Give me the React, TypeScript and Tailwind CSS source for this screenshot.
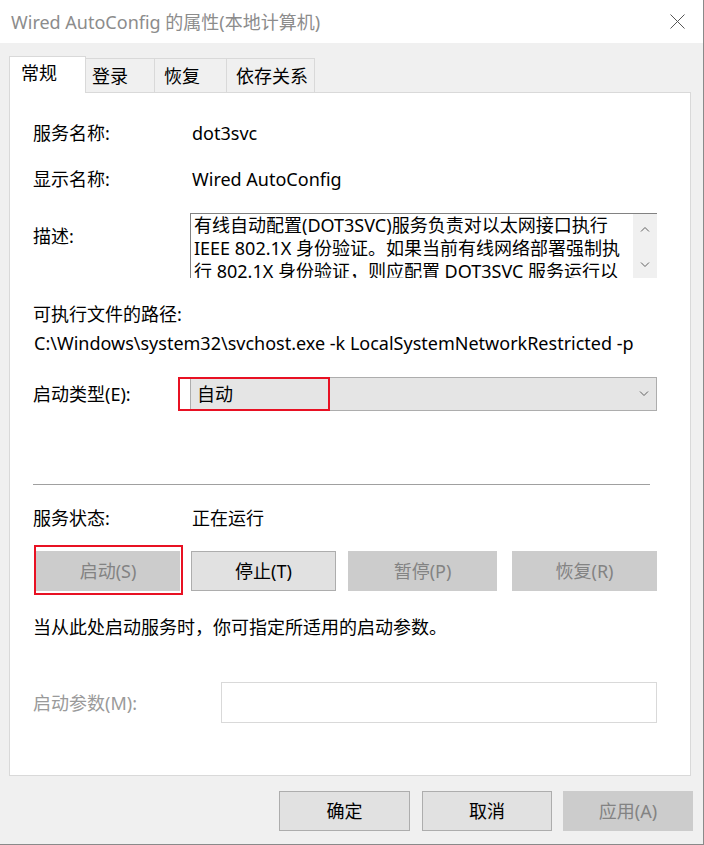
import React from 'react';

const font = { fontFamily: '"Noto Sans", "Noto Sans CJK SC", sans-serif' };

function Chevron({ up = false }: { up?: boolean }) {
  return (
    <svg width="10" height="6" viewBox="0 0 10 6" className="block">
      <path d={up ? 'M1 5.5 L5 1.5 L9 5.5' : 'M1 0.5 L5 4.5 L9 0.5'} fill="none" stroke="#606060" strokeWidth="1" />
    </svg>
  );
}

function Btn({ label, disabled, className = '' }: { label: string; disabled?: boolean; className?: string }) {
  return (
    <div
      className={`h-[40px] flex items-center justify-center border text-[18px] ${
        disabled ? 'bg-[#cccccc] border-[#cccccc] text-[#838383]' : 'bg-[#e1e1e1] border-[#adadad] text-black'
      } ${className}`}
    >
      {label}
    </div>
  );
}

export default function App() {
  return (
    <div style={font} className="w-[704px] h-[845px] bg-[#f0f0f0] border-r border-b border-[#8a8a8a] overflow-hidden text-black">
      {/* title bar */}
      <div className="h-[43px] bg-white flex items-center justify-between pl-[11px] pr-[18px]">
        <span className="text-[18px] text-[#8c8c8c] leading-none">Wired AutoConfig 的属性(本地计算机)</span>
        <svg width="15" height="15" viewBox="0 0 15 15">
          <path d="M0.5 0.5 L14.5 14.5 M14.5 0.5 L0.5 14.5" stroke="#555" strokeWidth="1" />
        </svg>
      </div>

      <div className="pl-[9px] pt-[13px]">
        {/* tabs */}
        <div className="flex items-end h-[36px] text-[18px]">
          <div className="relative z-10 w-[77px] h-[37px] -mb-px bg-white border-t border-l border-r border-[#d9d9d9] pl-[11px] pt-[4px] leading-[24px]">常规</div>
          <div className="w-[69px] h-[34px] border-t border-r border-[#d9d9d9] pl-[6px] pt-[5px] leading-[24px]">登录</div>
          <div className="w-[72px] h-[34px] border-t border-r border-[#d9d9d9] pl-[9px] pt-[5px] leading-[24px]">恢复</div>
          <div className="w-[88px] h-[34px] border-t border-r border-[#d9d9d9] pl-[9px] pt-[5px] leading-[24px]">依存关系</div>
        </div>

        {/* panel */}
        <div className="w-[682px] h-[684px] bg-white border border-[#d9d9d9] pl-[23px] text-[18px] leading-[24px]">
          <div className="mt-[28px] flex">
            <span className="w-[159px]">服务名称:</span>
            <span>dot3svc</span>
          </div>
          <div className="mt-[22px] flex">
            <span className="w-[159px]">显示名称:</span>
            <span>Wired AutoConfig</span>
          </div>
          <div className="mt-[22px] flex">
            <span className="w-[157px] pt-[11px]">描述:</span>
            <div className="w-[467px] h-[65px] border-t border-l border-[#828282] flex overflow-hidden">
              <div className="flex-1 pl-[3px] leading-[23px] whitespace-nowrap overflow-hidden">
                <div>有线自动配置(DOT3SVC)服务负责对以太网接口执行</div>
                <div>IEEE 802.1X 身份验证。如果当前有线网络部署强制执</div>
                <div>行 802.1X 身份验证，则应配置 DOT3SVC 服务运行以</div>
              </div>
              <div className="w-[24px] bg-[#f0f0f0] flex flex-col items-center pt-[12px] gap-[30px]">
                <Chevron up />
                <Chevron />
              </div>
            </div>
          </div>
          <div className="mt-[24px]">可执行文件的路径:</div>
          <div className="mt-[5px] pl-px">C:\Windows\system32\svchost.exe -k LocalSystemNetworkRestricted -p</div>
          <div className="mt-[22px] flex items-center">
            <span className="w-[157px]">启动类型(E):</span>
            <div className="relative w-[467px] h-[34px] bg-[#e5e5e5] border border-[#adadad] flex items-center justify-between pl-[6px] pr-[7px]">
              <span>自动</span>
              <Chevron />
              <div className="absolute left-[-13px] top-[-1px] w-[152px] h-[34px] border-2 border-[#e81123]" />
            </div>
          </div>
          <div className="mt-[73px] w-[617px] h-px bg-[#a0a0a0]" />
          <div className="mt-[21px] flex">
            <span className="w-[159px]">服务状态:</span>
            <span>正在运行</span>
          </div>
          <div className="mt-[21px] flex">
            <div className="relative ml-[3px] w-[144px]">
              <Btn label="启动(S)" disabled className="w-[144px]" />
              <div className="absolute left-[-2px] right-[-3px] top-[-6px] bottom-[-4px] border-2 border-[#e81123]" />
            </div>
            <Btn label="停止(T)" className="ml-[11px] w-[145px]" />
            <Btn label="暂停(P)" disabled className="ml-[12px] w-[149px]" />
            <Btn label="恢复(R)" disabled className="ml-[15px] w-[145px]" />
          </div>
          <div className="mt-[24px]">当从此处启动服务时，你可指定所适用的启动参数。</div>
          <div className="mt-[43px] flex items-center">
            <span className="w-[188px] text-[#9a9a9a]">启动参数(M):</span>
            <div className="w-[436px] h-[41px] border border-[#d9d9d9] bg-white" />
          </div>
        </div>
      </div>

      {/* bottom buttons */}
      <div className="mt-[15px] flex justify-end pr-[10px]">
        <Btn label="确定" className="w-[131px]" />
        <Btn label="取消" className="ml-[12px] w-[130px]" />
        <Btn label="应用(A)" disabled className="ml-[11px] w-[130px]" />
      </div>
    </div>
  );
}
